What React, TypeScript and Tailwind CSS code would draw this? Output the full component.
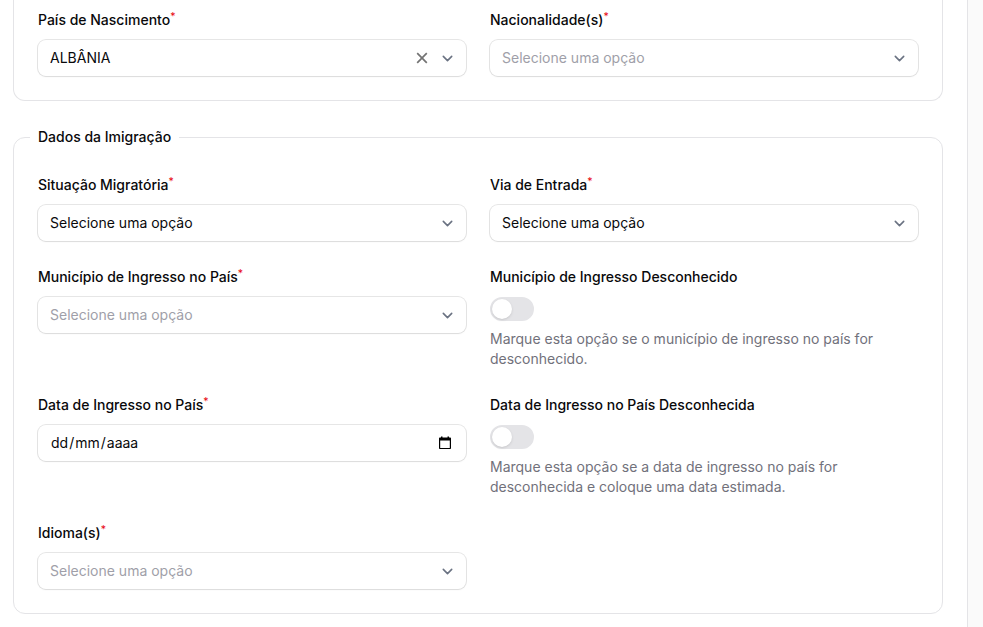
import type { ReactNode } from "react";

function Label({ htmlFor, required, children }: { htmlFor: string; required?: boolean; children: ReactNode }) {
  return (
    <label htmlFor={htmlFor} className="flex text-sm leading-6 font-medium text-[#09090b]">
      <span>
        {children}
        {required && <sup className="font-normal text-red-600">*</sup>}
      </span>
    </label>
  );
}

const control = "h-9 w-full rounded-lg bg-white pl-3 text-sm leading-6 shadow-xs ring-1 ring-[#09090b]/10";

type SelectProps = {
  id: string;
  label: string;
  options?: string[];
  muted?: boolean;
  clearable?: boolean;
};

function SelectField({ id, label, options = [], muted, clearable }: SelectProps) {
  return (
    <div className="grid content-start gap-2">
      <Label htmlFor={id} required>
        {label}
      </Label>
      <div className="relative">
        <select
          id={id}
          className={`${control} block appearance-none pr-14 outline-none focus:ring-2 focus:ring-amber-600 ${muted ? "text-zinc-400" : "text-[#09090b]"}`}
        >
          {!clearable && <option value="">Selecione uma opção</option>}
          {options.map((option) => (
            <option key={option}>{option}</option>
          ))}
        </select>
        {clearable && (
          <button
            type="button"
            aria-label="Limpar"
            className="absolute inset-y-0 right-9 flex w-4 items-center justify-center text-[#737373]"
          >
            <svg viewBox="0 0 12 12" className="size-3" fill="none" stroke="currentColor" strokeWidth="1.7">
              <path d="M1.2 1.2l9.6 9.6M10.8 1.2l-9.6 9.6" />
            </svg>
          </button>
        )}
        <svg
          viewBox="0 0 20 20"
          className="pointer-events-none absolute inset-y-0 right-2 my-auto size-[21px] text-gray-500"
          fill="none"
          stroke="currentColor"
          strokeWidth="1.5"
          strokeLinecap="round"
          strokeLinejoin="round"
        >
          <path d="M6 8l4 4 4-4" />
        </svg>
      </div>
    </div>
  );
}

const segment =
  "field-sizing-content bg-transparent px-px text-[#09090b] outline-none placeholder:text-[#09090b] focus:bg-amber-100";

function DateField({ id, label }: { id: string; label: string }) {
  return (
    <div className="grid content-start gap-2">
      <Label htmlFor={id} required>
        {label}
      </Label>
      <div
        role="group"
        aria-label={label}
        className={`${control} flex items-center pr-3.5 text-[#09090b] focus-within:ring-2 focus-within:ring-amber-600`}
      >
        <input id={id} type="text" inputMode="numeric" maxLength={2} placeholder="dd" className={segment} />
        <span>/</span>
        <input type="text" aria-label="Mês" inputMode="numeric" maxLength={2} placeholder="mm" className={segment} />
        <span>/</span>
        <input type="text" aria-label="Ano" inputMode="numeric" maxLength={4} placeholder="aaaa" className={segment} />
        <button type="button" aria-label="Abrir calendário" className="ml-auto text-black">
          <svg viewBox="0 0 14 14" className="size-3.5" fill="currentColor">
            <path d="M3 0.5h1.5V1.5h5V0.5H11V1.5h1.2c.5 0 .8.3.8.8v9.9c0 .5-.3.8-.8.8H1.8c-.5 0-.8-.3-.8-.8V2.3c0-.5.3-.8.8-.8H3zM2.2 4.5v7.4h9.6V4.5z" />
          </svg>
        </button>
      </div>
    </div>
  );
}

function ToggleField({ id, label, hint }: { id: string; label: string; hint: string }) {
  return (
    <div className="grid content-start gap-2">
      <Label htmlFor={id}>{label}</Label>
      <input
        id={id}
        type="checkbox"
        role="switch"
        aria-describedby={`${id}-hint`}
        className="flex h-6 w-11 cursor-pointer appearance-none rounded-full border-2 border-zinc-200 bg-zinc-200 before:size-5 before:rounded-full before:bg-white before:shadow-sm before:transition-transform checked:border-amber-600 checked:bg-amber-600 checked:before:translate-x-5"
      />
      <p id={`${id}-hint`} className="text-sm leading-5 text-zinc-500">
        {hint}
      </p>
    </div>
  );
}

export default function App() {
  return (
    <div className="flex min-h-screen bg-zinc-50 pr-[15px] font-['Inter',sans-serif]">
      <form className="flex min-w-0 flex-1 flex-col gap-6 border-r border-zinc-200 bg-white pr-6 pb-3 pl-[13px]">
        <fieldset className="rounded-b-xl border border-t-0 border-zinc-200 px-6 pt-2 pb-6">
          <div className="grid grid-cols-2 gap-6">
            <SelectField id="pais" label="País de Nascimento" options={["ALBÂNIA"]} clearable />
            <SelectField id="nacionalidade" label="Nacionalidade(s)" muted />
          </div>
        </fieldset>

        <fieldset className="rounded-xl border border-zinc-200 p-6">
          <legend className="-ml-2 px-2 text-sm leading-6 font-medium text-[#09090b]">Dados da Imigração</legend>
          <div className="grid grid-cols-2 gap-6">
            <SelectField id="situacao" label="Situação Migratória" />
            <SelectField id="via" label="Via de Entrada" />
            <SelectField id="municipio" label="Município de Ingresso no País" muted />
            <ToggleField
              id="municipio-desconhecido"
              label="Município de Ingresso Desconhecido"
              hint="Marque esta opção se o município de ingresso no país for desconhecido."
            />
            <DateField id="data" label="Data de Ingresso no País" />
            <ToggleField
              id="data-desconhecida"
              label="Data de Ingresso no País Desconhecida"
              hint="Marque esta opção se a data de ingresso no país for desconhecida e coloque uma data estimada."
            />
            <SelectField id="idioma" label="Idioma(s)" muted />
          </div>
        </fieldset>
      </form>
    </div>
  );
}
